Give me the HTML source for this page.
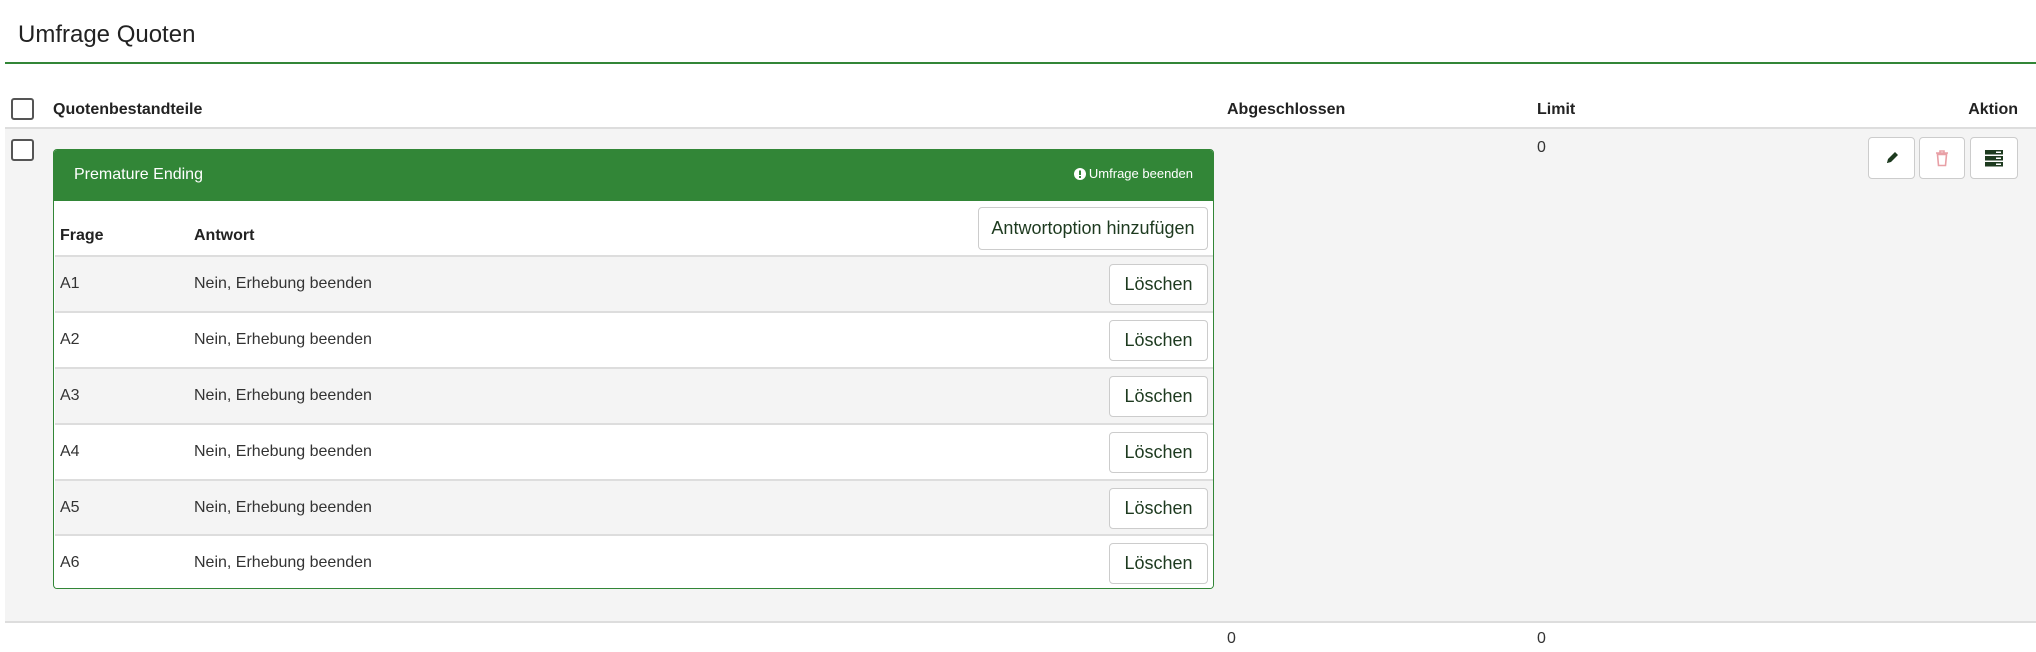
<!DOCTYPE html>
<html><head><meta charset="utf-8"><style>
*{box-sizing:border-box;margin:0;padding:0}
body{width:2036px;height:652px;background:#fff;font-family:"Liberation Sans",Arial,sans-serif;color:#333;position:relative;overflow:hidden}
.a{position:absolute}
.cb{position:absolute;width:23px;height:22px;border:2px solid #555;border-radius:3px;background:#fff}
.th{position:absolute;font-weight:bold;font-size:16px;color:#222;top:101px}
.btn{position:absolute;background:#fff;border:1px solid #ccc;border-radius:4px;font-size:18px;color:#1d3a1f;display:flex;align-items:center;justify-content:center}
.row{position:absolute;left:1px;width:1160px;height:56px;border-top:2px solid #ddd;font-size:16px}
.row span{position:absolute;top:18px}
</style></head><body>
<div class="a" style="left:18px;top:21px;font-size:24px;color:#222">Umfrage Quoten</div>
<div class="a" style="left:5px;top:62px;width:2031px;height:2px;background:#328637"></div>

<div class="cb" style="left:11px;top:98px"></div>
<div class="th" style="left:53px">Quotenbestandteile</div>
<div class="th" style="left:1227px">Abgeschlossen</div>
<div class="th" style="left:1537px">Limit</div>
<div class="th" style="right:18px">Aktion</div>
<div class="a" style="left:5px;top:127px;width:2031px;height:2px;background:#ddd"></div>
<div class="a" style="left:5px;top:129px;width:2031px;height:492px;background:#f4f4f4"></div>
<div class="a" style="left:5px;top:621px;width:2031px;height:2px;background:#ddd"></div>
<div class="cb" style="left:11px;top:139px"></div>
<div class="a" style="left:1537px;top:139px;font-size:16px">0</div>
<div class="a" style="left:1227px;top:630px;font-size:16px">0</div>
<div class="a" style="left:1537px;top:630px;font-size:16px">0</div>

<div class="btn" style="left:1868px;top:137px;width:47px;height:42px"><svg width="16" height="16" viewBox="0 0 16 16"><path d="M3 13l1-4 7-7 3 3-7 7z" fill="#1d3a1f"/><path d="M3 13l1-3 2 2z" fill="#1d3a1f"/></svg></div>
<div class="btn" style="left:1919px;top:137px;width:46px;height:42px"><svg width="14" height="17" viewBox="0 0 14 17"><path d="M1 3h12M5 3V1h4v2M2.5 4.5h9l-1 11h-7z" fill="none" stroke="#e8a0a6" stroke-width="1.6"/></svg></div>
<div class="btn" style="left:1970px;top:137px;width:48px;height:42px"><svg width="18" height="17" viewBox="0 0 18 17"><rect x="0" y="0" width="18" height="4.5" fill="#1d3a1f"/><rect x="0" y="6" width="18" height="4.5" fill="#1d3a1f"/><rect x="0" y="12" width="18" height="4.5" fill="#1d3a1f"/><rect x="11" y="1.5" width="5" height="1.5" fill="#fff"/><rect x="11" y="7.5" width="5" height="1.5" fill="#fff"/><rect x="11" y="13.5" width="5" height="1.5" fill="#fff"/></svg></div>

<div class="a" style="left:53px;top:149px;width:1161px;height:440px;border:1px solid #328637;border-radius:4px;background:#fff;overflow:hidden">
 <div class="a" style="left:0;top:0;width:1161px;height:51px;background:#328637;color:#fff">
  <div class="a" style="left:20px;top:16px;font-size:16px">Premature Ending</div>
  <div class="a" style="right:22px;top:16px;font-size:13px;display:flex;align-items:center;gap:3px"><svg width="12" height="12" viewBox="0 0 12 12"><circle cx="6" cy="6" r="6" fill="#fff"/><rect x="5" y="2.5" width="2" height="4.5" fill="#328637"/><rect x="5" y="8" width="2" height="2" fill="#328637"/></svg>Umfrage beenden</div>
 </div>
 <div class="a" style="left:6px;top:77px;font-size:16px;font-weight:bold;color:#222">Frage</div>
 <div class="a" style="left:140px;top:77px;font-size:16px;font-weight:bold;color:#222">Antwort</div>
 <div class="btn" style="left:924px;top:57px;width:230px;height:43px">Antwortoption hinzufügen</div>
 <div class="row" style="top:105px;background:#f4f4f4"><span style="left:5px">A1</span><span style="left:139px">Nein, Erhebung beenden</span><div class="btn" style="left:1054px;top:7px;width:99px;height:41px">Löschen</div></div>
 <div class="row" style="top:161px;background:#fff"><span style="left:5px">A2</span><span style="left:139px">Nein, Erhebung beenden</span><div class="btn" style="left:1054px;top:7px;width:99px;height:41px">Löschen</div></div>
 <div class="row" style="top:217px;background:#f4f4f4"><span style="left:5px">A3</span><span style="left:139px">Nein, Erhebung beenden</span><div class="btn" style="left:1054px;top:7px;width:99px;height:41px">Löschen</div></div>
 <div class="row" style="top:273px;background:#fff"><span style="left:5px">A4</span><span style="left:139px">Nein, Erhebung beenden</span><div class="btn" style="left:1054px;top:7px;width:99px;height:41px">Löschen</div></div>
 <div class="row" style="top:329px;background:#f4f4f4"><span style="left:5px">A5</span><span style="left:139px">Nein, Erhebung beenden</span><div class="btn" style="left:1054px;top:7px;width:99px;height:41px">Löschen</div></div>
 <div class="row" style="top:384px;background:#fff"><span style="left:5px">A6</span><span style="left:139px">Nein, Erhebung beenden</span><div class="btn" style="left:1054px;top:7px;width:99px;height:41px">Löschen</div></div>
</div>
</body></html>
